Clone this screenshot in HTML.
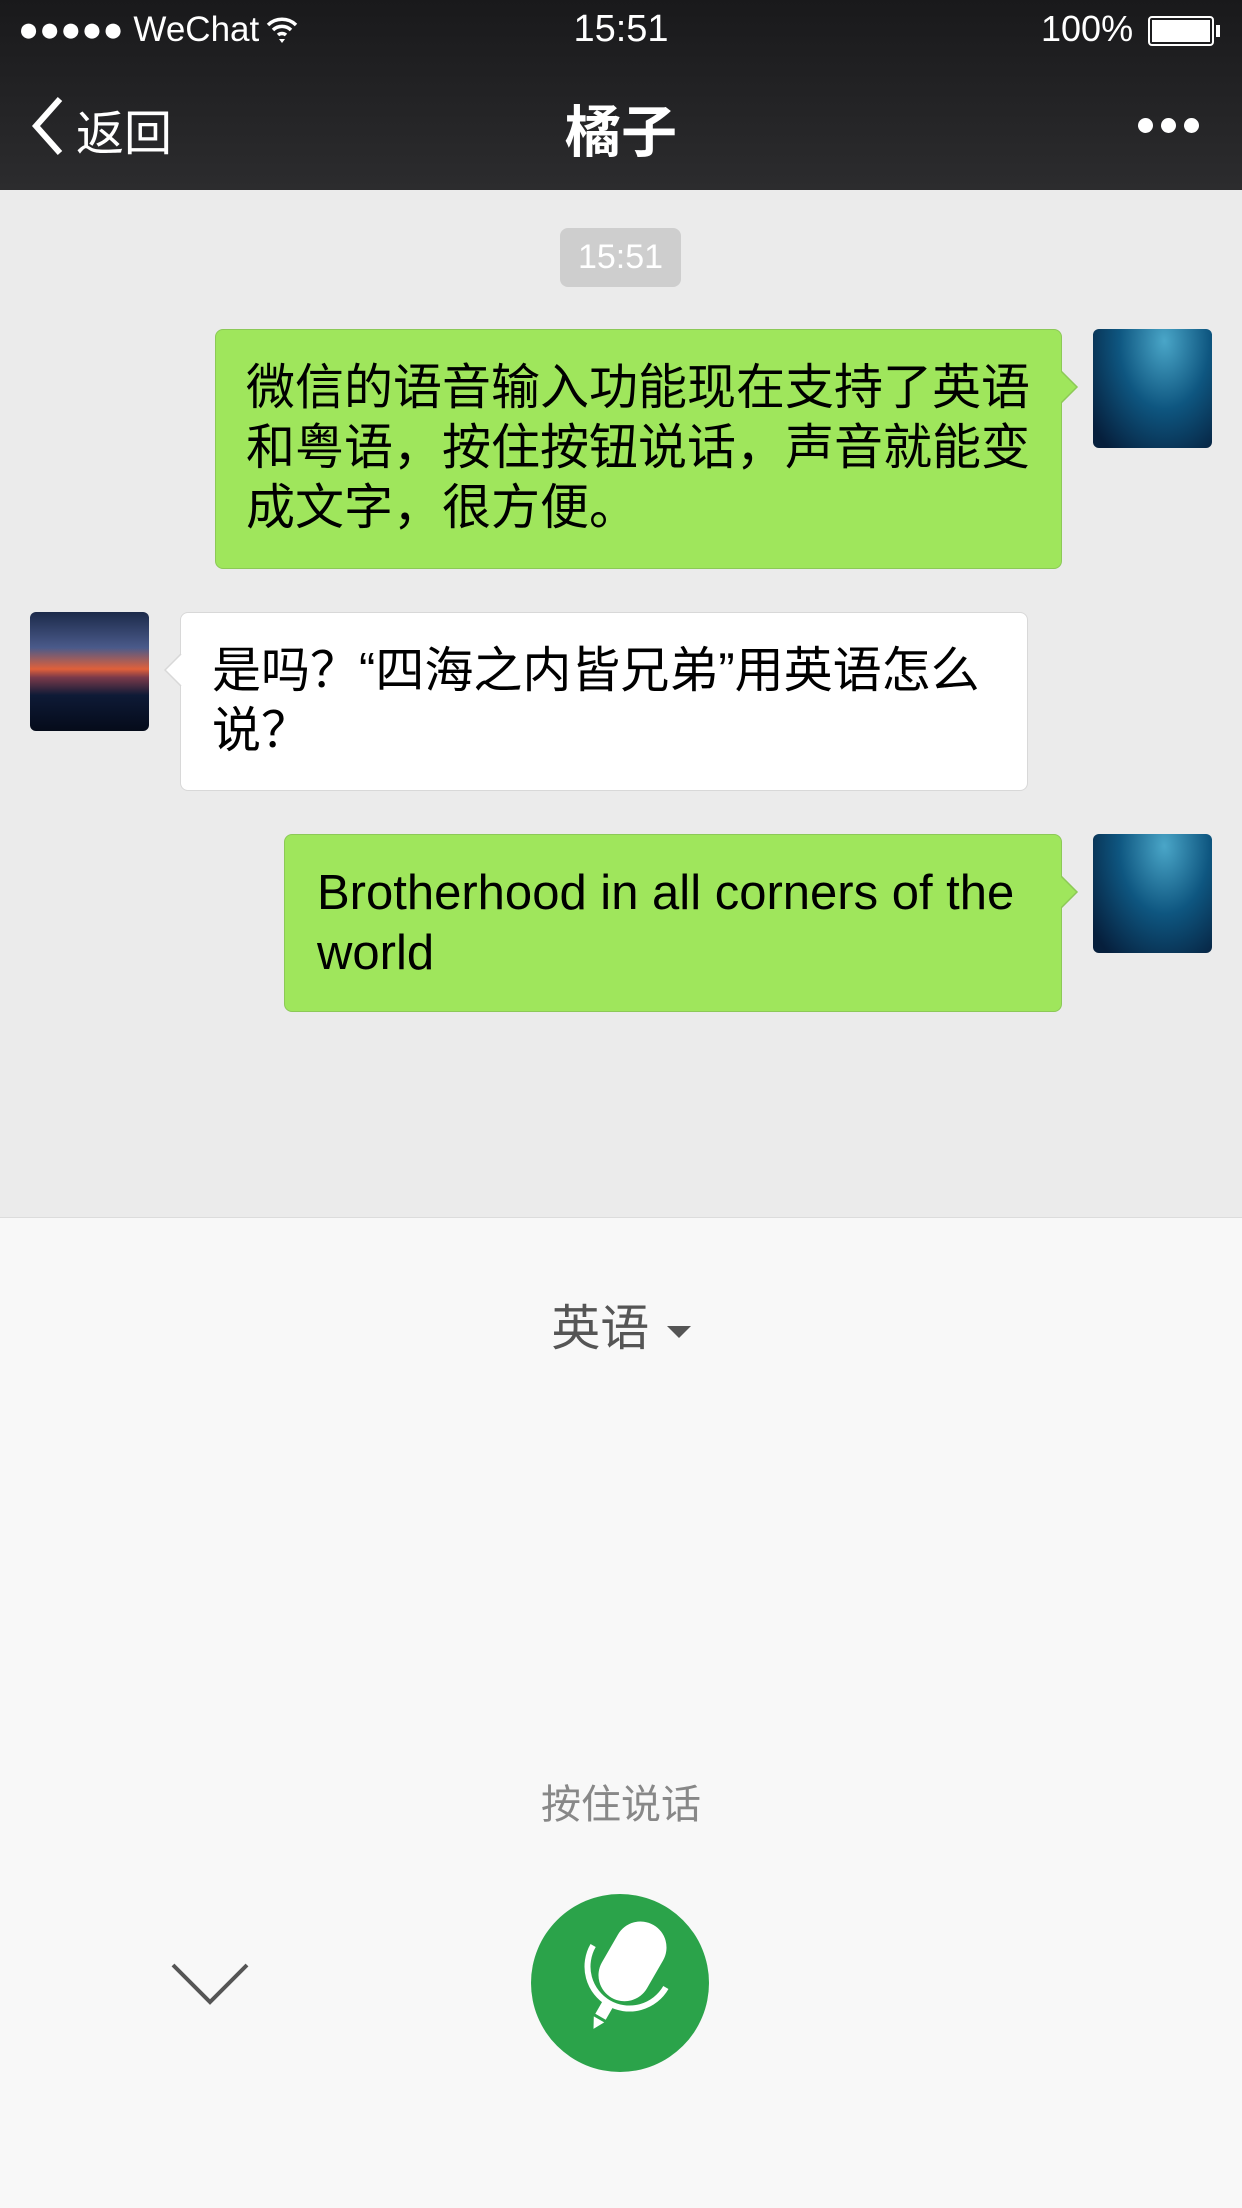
<!DOCTYPE html>
<html><head><meta charset="utf-8"><style>
*{margin:0;padding:0;box-sizing:border-box}
body{width:1242px;height:2208px;position:relative;overflow:hidden;background:#f8f8f8;font-family:"Liberation Sans","Noto Sans CJK SC",sans-serif}
.top{position:absolute;left:0;top:0;width:1242px;height:190px;background:linear-gradient(#19191b,#2c2c2e);color:#fff}
.chat{position:absolute;left:0;top:190px;width:1242px;height:1028px;background:#ebebeb;border-bottom:1px solid #dcdcdc}
.ab{position:absolute}
.bub{position:absolute;border-radius:8px;font-size:49px;line-height:60px;color:#000;padding:28px 30px}
.g{background:#9fe65c;border:1px solid #8cc957}
.w{background:#fff;border:1px solid #d8d8d8}
.av{position:absolute;width:119px;height:119px;border-radius:6px}
.sea{background:radial-gradient(ellipse at 60% 10%,#4aa6c8,#0e5680 45%,#061f3c 90%)}
.sun{background:linear-gradient(#1c2a4a 0%,#4a5a8a 30%,#e0603a 48%,#7a3a4a 55%,#0e1a36 70%,#050b1a 100%)}
</style></head><body>
<div class="top">
 <div class="ab" style="left:18px;top:10px;font-size:35px">●●●●● WeChat</div>
 <svg class="ab" style="left:266px;top:16px" width="32" height="28" viewBox="0 0 32 28"><path d="M2 9a20 20 0 0 1 28 0M7 14a13 13 0 0 1 18 0M12 19a6 6 0 0 1 8 0" stroke="#fff" stroke-width="3.5" fill="none"/><path d="M16 27l-3-4h6z" fill="#fff"/></svg>
 <div class="ab" style="left:0;width:1242px;text-align:center;top:8px;font-size:38px">15:51</div>
 <div class="ab" style="left:1041px;top:8px;font-size:36px">100%</div>
 <div class="ab" style="left:1148px;top:16px;width:66px;height:30px;border:2px solid #fff;border-radius:4px;padding:2px"><div style="background:#fff;width:100%;height:100%"></div></div>
 <div class="ab" style="left:1216px;top:25px;width:4px;height:12px;background:#fff"></div>
 <svg class="ab" style="left:28px;top:95px" width="36" height="62" viewBox="0 0 36 62"><path d="M32 4L8 31l24 27" stroke="#fff" stroke-width="6" fill="none"/></svg>
 <div class="ab" style="left:76px;top:94px;font-size:48px">返回</div>
 <div class="ab" style="left:0;width:1242px;text-align:center;top:88px;font-size:56px;font-weight:bold">橘子</div>
 <div class="ab" style="left:1138px;top:118px;font-size:0">
  <span style="display:inline-block;width:15px;height:15px;border-radius:50%;background:#fff;margin-right:8px"></span><span style="display:inline-block;width:15px;height:15px;border-radius:50%;background:#fff;margin-right:8px"></span><span style="display:inline-block;width:15px;height:15px;border-radius:50%;background:#fff"></span>
 </div>
</div>
<div class="chat">
 <div class="ab" style="left:560px;top:38px;width:121px;height:59px;background:#cecece;border-radius:8px;color:#fff;font-size:34px;line-height:59px;text-align:center">15:51</div>
 <div class="bub g" style="left:215px;top:139px;width:847px;height:240px;padding-right:20px">微信的语音输入功能现在支持了英语和粤语，按住按钮说话，声音就能变成文字，很方便。</div>
 <svg class="ab" style="left:1061px;top:181px" width="18" height="32"><path d="M0 0L16 16L0 32" fill="#9fe65c" stroke="#8cc957" stroke-width="1.5"/></svg>
 <div class="av sea" style="left:1093px;top:139px"></div>
 <div class="av sun" style="left:30px;top:422px"></div>
 <div class="bub w" style="left:180px;top:422px;width:848px;height:179px;padding-left:31px;padding-right:20px">是吗？“四海之内皆兄弟”用英语怎么说？</div>
 <svg class="ab" style="left:164px;top:464px" width="18" height="32"><path d="M17 0L1 16L17 32" fill="#fff" stroke="#d8d8d8" stroke-width="1.5"/></svg>
 <div class="bub g" style="left:284px;top:644px;width:778px;height:178px;padding-left:32px;padding-right:20px">Brotherhood in all corners of the world</div>
 <svg class="ab" style="left:1061px;top:686px" width="18" height="32"><path d="M0 0L16 16L0 32" fill="#9fe65c" stroke="#8cc957" stroke-width="1.5"/></svg>
 <div class="av sea" style="left:1093px;top:644px"></div>
</div>
<div class="ab" style="left:0;width:1242px;text-align:center;top:1289px;font-size:49px;color:#555">英语 <span style="display:inline-block;width:0;height:0;border-left:12px solid transparent;border-right:12px solid transparent;border-top:12px solid #555;vertical-align:middle;margin-left:4px"></span></div>
<div class="ab" style="left:0;width:1242px;text-align:center;top:1772px;font-size:40px;color:#888">按住说话</div>
<svg class="ab" style="left:170px;top:1962px" width="80" height="46"><path d="M3 3L40 40L77 3" stroke="#555" stroke-width="4" fill="none"/></svg>
<svg class="ab" style="left:531px;top:1894px" width="178" height="178" viewBox="0 0 178 178">
 <circle cx="89" cy="89" r="89" fill="#2ba34a"/>
 <g transform="rotate(30 89 89)">
  <rect x="63" y="22" width="52" height="84" rx="26" fill="#fff"/>
  <path d="M47 70a42 42 0 0 0 84 0" stroke="#fff" stroke-width="6" fill="none"/>
  <rect x="83" y="112" width="12" height="16" fill="#fff"/>
  <path d="M83 131h12l-6 11z" fill="#fff"/>
 </g>
</svg>
</body></html>
